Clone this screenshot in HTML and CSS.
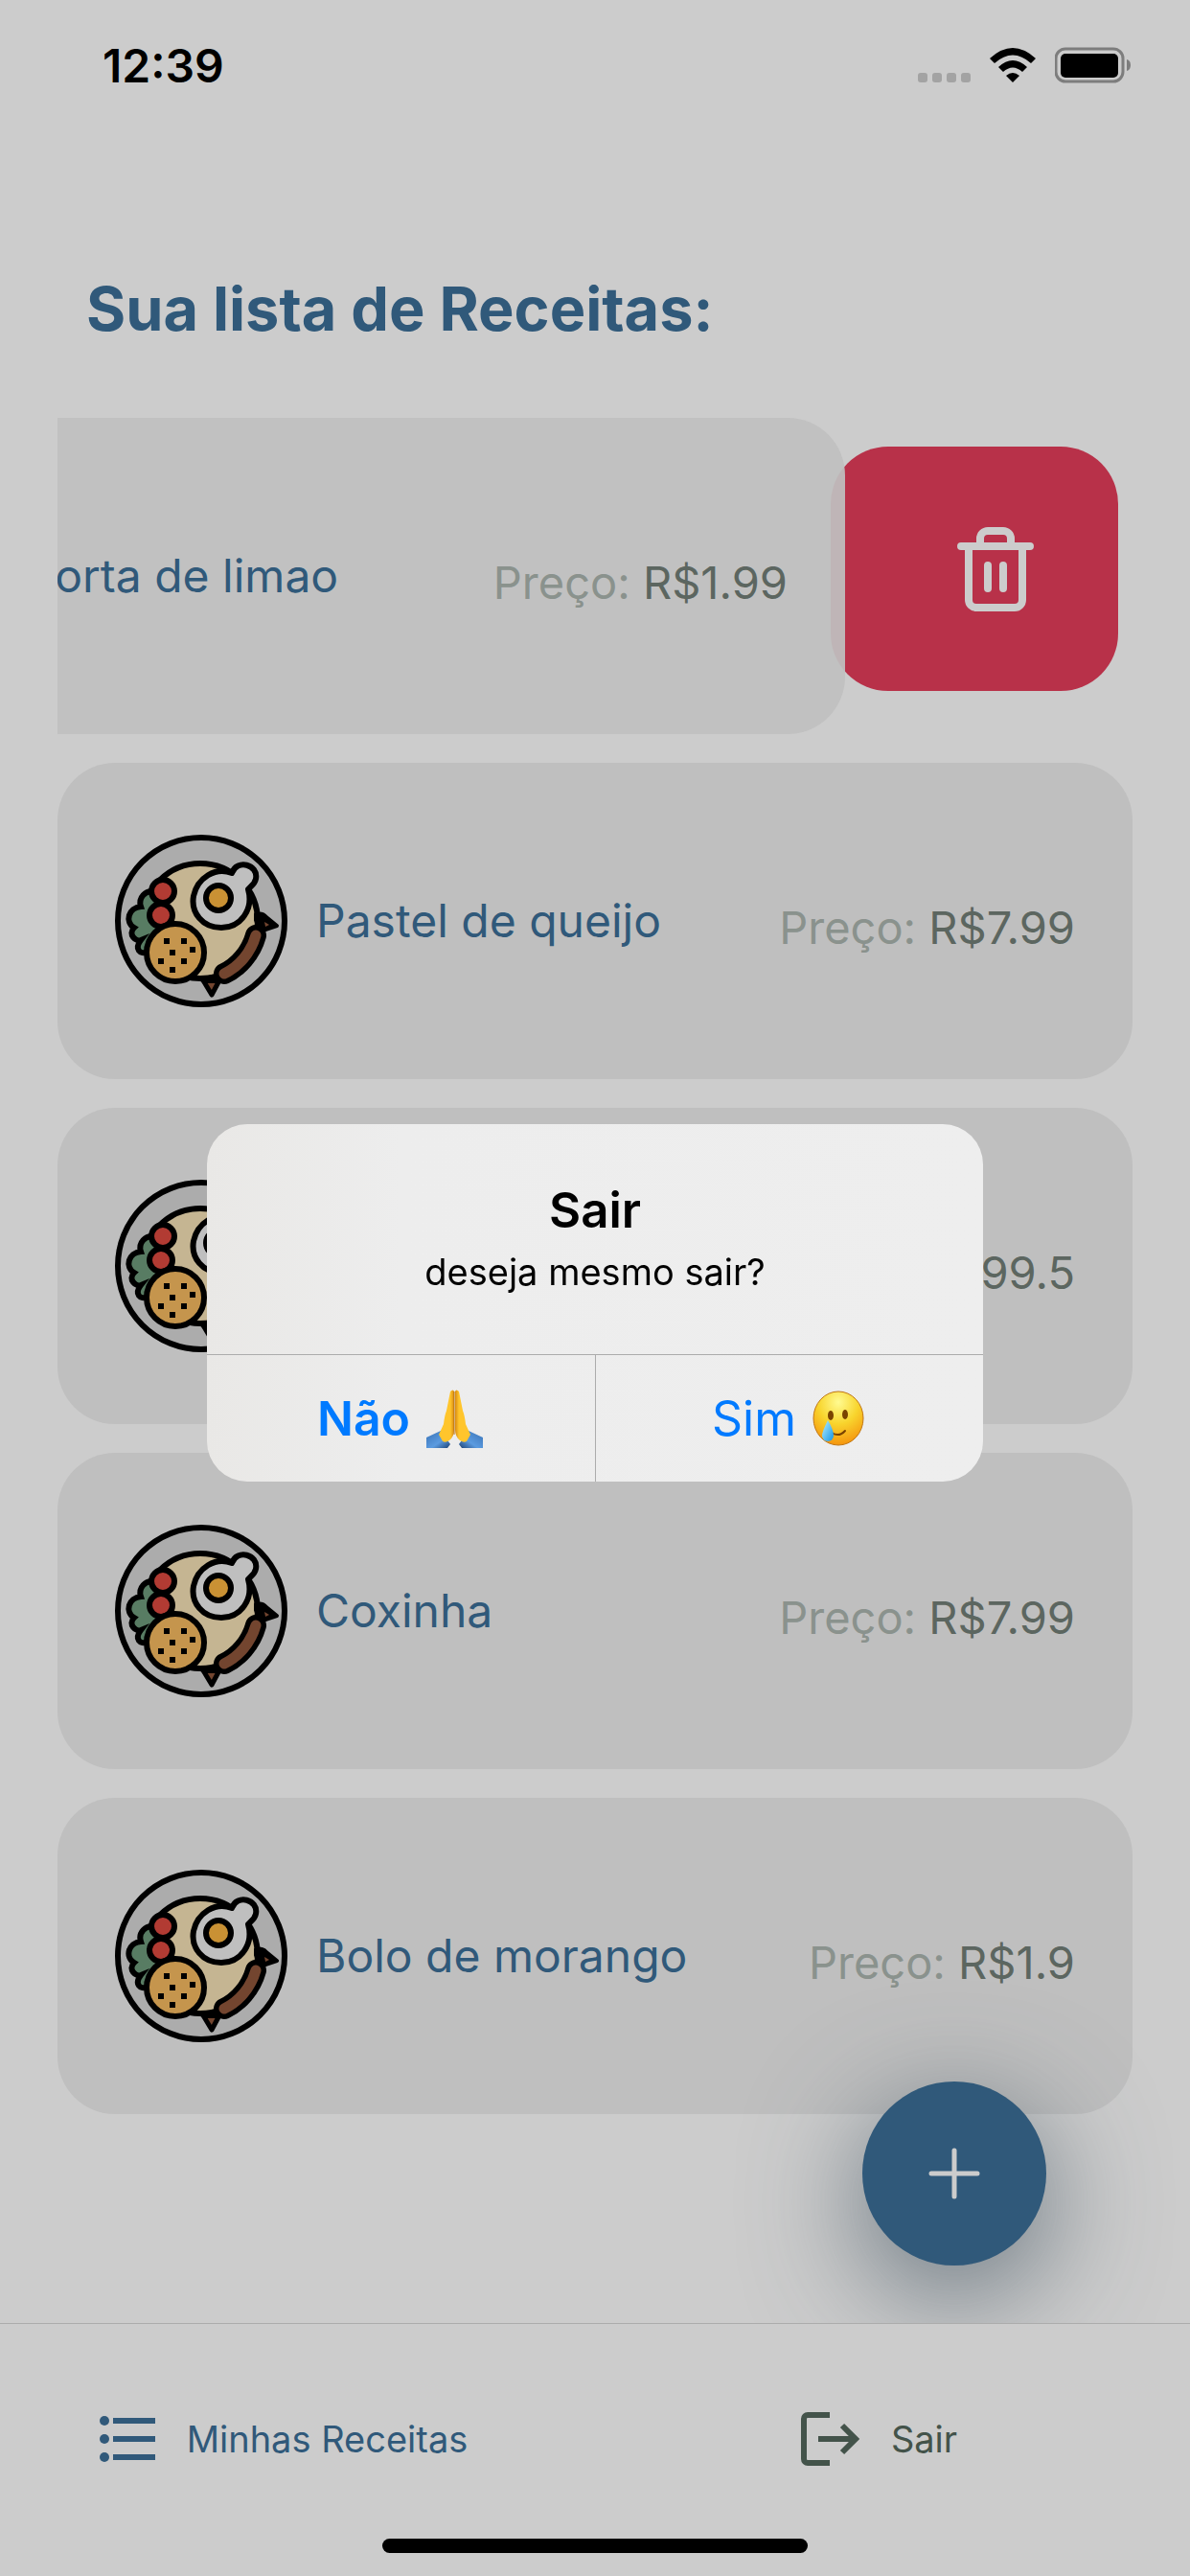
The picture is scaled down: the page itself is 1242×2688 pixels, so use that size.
FILE: index.html
```html
<!DOCTYPE html>
<html lang="pt-BR">
<head>
<meta charset="utf-8">
<meta name="viewport" content="width=device-width, initial-scale=1">
<title>Minhas Receitas</title>
<link rel="stylesheet" href="styles.css">
</head>
<body>
<svg class="sprite" aria-hidden="true">
  <symbol id="plate" viewBox="0 0 180 180">
    <circle cx="90" cy="90" r="87" fill="#acacac" stroke="#000" stroke-width="6"/>
    <circle cx="89" cy="90" r="60" fill="#c5b592" stroke="#000" stroke-width="6"/>
    <path d="M147 89V83q7-2 11 3l11 9-18 6Z" fill="#000" stroke="#000" stroke-width="4" stroke-linejoin="round"/>
    <path d="M156 91l5 3-4 2Z" fill="#73452f"/>
    <path d="M92 152l9 15 8-15Z" fill="#73452f" stroke="#000" stroke-width="5" stroke-linejoin="round"/>
    <path d="M84 149h24v6H92Z" fill="#000"/>
    <path d="M114 145C129 138 142 123 147 105" fill="none" stroke="#000" stroke-width="22" stroke-linecap="round"/>
    <path d="M114 145C129 138 142 123 147 105" fill="none" stroke="#73452f" stroke-width="11" stroke-linecap="round"/>
    <path d="M43 60C34 57 26 66 29 75C16 76 12 91 22 97C15 104 24 112 29 110C22 119 28 126 36 122L62 92Z" transform="translate(-2 0)" fill="#587c63" stroke="#000" stroke-width="6"/>
    <path d="M122 40C127 25 150 31 147 46C146 52 141 54 139 57C145 78 131 97 111 97C91 97 79 81 82 64C86 45 105 33 122 40Z" fill="#bfbfbf" stroke="#000" stroke-width="6" stroke-linejoin="round"/>
    <circle cx="108" cy="66" r="13" fill="#c99134" stroke="#000" stroke-width="6"/>
    <circle cx="50" cy="59" r="12" fill="#b23b33" stroke="#000" stroke-width="6"/>
    <circle cx="48" cy="84" r="12" fill="#b23b33" stroke="#000" stroke-width="6"/>
    <circle cx="63" cy="123" r="30" fill="#c5954d" stroke="#000" stroke-width="6"/>
    <path d="M51 108h6v6h-6zM69 108h6v6h-6zM78 117h6v6h-6zM57 120h6v6h-6zM45 129h6v6h-6zM69 129h6v6h-6zM57 138h6v6h-6z"/>
  </symbol>
</svg>

<div class="app">
  <header class="status">
    <span class="clock">12:39</span>
    <span class="indicators">
      <svg width="55" height="36" viewBox="0 0 55 36" fill="#a3a3a3"><rect y="26" width="10" height="10" rx="3"/><rect x="15" y="26" width="10" height="10" rx="3"/><rect x="30" y="26" width="10" height="10" rx="3"/><rect x="45" y="26" width="10" height="10" rx="3"/></svg>
      <svg width="48" height="36" viewBox="0 0 48 36"><path d="M0 11Q24-11 48 11L43 16Q24-1 5 16Z"/><path d="M9 20Q24 6 39 20L34 25Q24 16 14 25Z"/><path d="M17 29Q24 23 31 29L24 36Z"/></svg>
      <svg width="80" height="38" viewBox="0 0 80 38"><rect x="1" y="2" width="70" height="34" rx="10" fill="none" stroke="#7d7d7d" stroke-width="3"/><rect x="6" y="7" width="60" height="25" rx="5"/><path d="M75 13q4 1 4 6t-4 6Z" fill="#7d7d7d"/></svg>
    </span>
  </header>

  <main class="content">
    <h1>Sua lista de Receitas:</h1>
    <ul class="recipes">
      <li class="row swiped">
        <button class="delete" type="button" aria-label="Excluir">
          <svg width="80" height="88" viewBox="0 0 80 88" fill="none" stroke="#ccc" stroke-width="8" stroke-linecap="round"><path d="M4 20H76M12 20V76a8 8 0 0 0 8 8H60a8 8 0 0 0 8-8V20M24 20V12a8 8 0 0 1 8-8H48a8 8 0 0 1 8 8v8M32 40V64M48 40V64"/></svg>
        </button>
        <article class="card"><svg class="plate"><use href="#plate"/></svg><h2>Torta de limao</h2><p class="price">Preço: <b>R$1.99</b></p></article>
      </li>
      <li class="row"><article class="card"><svg class="plate"><use href="#plate"/></svg><h2>Pastel de queijo</h2><p class="price">Preço: <b>R$7.99</b></p></article></li>
      <li class="row"><article class="card"><svg class="plate"><use href="#plate"/></svg><h2>Bolo</h2><p class="price">Preço: <b>R$99.5</b></p></article></li>
      <li class="row"><article class="card"><svg class="plate"><use href="#plate"/></svg><h2>Coxinha</h2><p class="price">Preço: <b>R$7.99</b></p></article></li>
      <li class="row"><article class="card"><svg class="plate"><use href="#plate"/></svg><h2>Bolo de morango</h2><p class="price">Preço: <b>R$1.9</b></p></article></li>
    </ul>
    <button class="fab" type="button" aria-label="Adicionar receita">
      <svg width="54" height="54" viewBox="0 0 54 54" stroke="#ccc" stroke-width="5" stroke-linecap="round"><path d="M27 3V51M3 27H51"/></svg>
    </button>
  </main>

  <nav class="tabs">
    <a class="tab active" href="#receitas">
      <svg width="60" height="60" viewBox="0 0 60 60" fill="currentColor"><circle cx="6" cy="11" r="5"/><circle cx="6" cy="30" r="5"/><circle cx="6" cy="49" r="5"/><path d="M15 8H59v6H15zM15 27H59v6H15zM15 46H59v6H15z"/></svg>
      Minhas Receitas
    </a>
    <a class="tab" href="#sair">
      <svg width="64" height="60" viewBox="0 0 64 60" fill="none" stroke="currentColor" stroke-width="6"><path d="M32 5H9a4 4 0 0 0-4 4V51a4 4 0 0 0 4 4H32M20 30H60M45 16L59 30L45 44"/></svg>
      Sair
    </a>
  </nav>
  <div class="home-bar"></div>
</div>

<div class="overlay">
  <section class="alert" role="alertdialog" aria-labelledby="alert-title" aria-describedby="alert-text">
    <div class="alert-body">
      <h2 id="alert-title">Sair</h2>
      <p id="alert-text">deseja mesmo sair?</p>
    </div>
    <div class="alert-actions">
      <button class="strong" type="button">Não
        <svg width="64" height="62" viewBox="0 0 64 62" role="img" aria-label="mãos juntas">
          <defs>
            <linearGradient id="skin"><stop offset="0" stop-color="#ffc52c"/><stop offset=".75" stop-color="#ffc52c"/><stop offset="1" stop-color="#d78a12"/></linearGradient>
            <linearGradient id="cuff" y2="1"><stop offset="0" stop-color="#3972b5"/><stop offset=".6" stop-color="#5b9be0"/><stop offset="1" stop-color="#1d4274"/></linearGradient>
          </defs>
          <g id="hand"><path d="M3 51L18 44L28 58L25 62H3Z" fill="url(#cuff)"/><path d="M28 3q3-3 4 0V43q0 7-5 11q-4 3-7 1L16 48L21 37Q22 28 24 23Q26 13 28 3Z" fill="url(#skin)"/></g>
          <use href="#hand" transform="translate(65 0) scale(-1 1)"/>
          <path d="M32 3V48" stroke="#b9700f" stroke-width="1"/>
        </svg>
      </button>
      <button type="button">Sim
        <svg width="60" height="62" viewBox="4 0 60 62" role="img" aria-label="rosto sorrindo com lágrima">
          <defs>
            <radialGradient id="face" cx=".5" cy=".2" r=".8"><stop offset="0" stop-color="#fffb91"/><stop offset=".5" stop-color="#f8d52e"/><stop offset="1" stop-color="#f5950d"/></radialGradient>
            <linearGradient id="tear" y2="1"><stop offset="0" stop-color="#b8f0ff"/><stop offset="1" stop-color="#1495e6"/></linearGradient>
          </defs>
          <ellipse cx="34" cy="31" rx="26" ry="28" fill="url(#face)" stroke="#c07612" stroke-width="1"/>
          <ellipse cx="26" cy="28" rx="3" ry="5" fill="#7a4300"/><ellipse cx="41" cy="27" rx="3" ry="5" fill="#7a4300"/>
          <path d="M27 46Q35 51 41 44" fill="none" stroke="#7a4300" stroke-width="2" stroke-linecap="round"/>
          <path d="M23 33Q17 45 17 49a6 6 0 0 0 12 0Q29 43 23 33Z" fill="url(#tear)"/>
        </svg>
      </button>
    </div>
  </section>
</div>
</body>
</html>
```
FILE: styles.css
```css
* { box-sizing: border-box; }

body {
  margin: 0;
  background: #ccc;
  color: #000;
  font-family: Inter, "Liberation Sans", sans-serif;
}

h1, h2, p, ul { margin: 0; padding: 0; }
ul { list-style: none; }
button { border: 0; padding: 0; background: none; font: inherit; }
svg { display: block; flex: none; }
.sprite { position: absolute; width: 0; height: 0; }

.app {
  min-height: 100vh;
  display: flex;
  flex-direction: column;
}

.status {
  display: flex;
  justify-content: space-between;
  align-items: center;
  height: 136px;
  padding: 0 61px 0 107px;
}
.clock { font-size: 48px; font-weight: 600; }
.indicators { display: flex; align-items: center; gap: 20px; }

.content {
  position: relative;
  flex: 1;
  padding: 146px 60px 0;
  overflow: hidden;
}
h1 {
  padding: 0 30px;
  font-size: 63px;
  line-height: 80px;
  font-weight: 700;
  color: #30597a;
}

.recipes {
  display: flex;
  flex-direction: column;
  gap: 30px;
  padding-top: 74px;
}
.row { position: relative; overflow: hidden; }
.card {
  display: flex;
  align-items: center;
  gap: 30px;
  height: 330px;
  padding: 0 60px;
  border-radius: 60px;
  background: #bfbfbf;
}
.plate { width: 180px; height: 180px; }
.card h2 {
  flex: 1;
  font-size: 48px;
  line-height: 60px;
  font-weight: 400;
  color: #30597a;
  white-space: nowrap;
}
.price {
  padding-top: 14px;
  font-size: 47px;
  line-height: 58px;
  color: #8a928d;
  white-space: nowrap;
}
.price b { font-weight: 400; color: #5c6660; }

.swiped .card { position: relative; left: -300px; background: rgba(191, 191, 191, 0.93); }
.delete {
  position: absolute;
  top: 30px;
  right: 15px;
  display: flex;
  align-items: center;
  justify-content: center;
  width: 300px;
  height: 255px;
  padding-left: 44px;
  border-radius: 60px;
  background: #b83149;
}

.fab {
  position: absolute;
  right: 150px;
  bottom: 60px;
  display: flex;
  align-items: center;
  justify-content: center;
  width: 192px;
  height: 192px;
  border-radius: 50%;
  background: #30597a;
  box-shadow: 0 30px 120px rgba(60, 78, 92, 0.7);
}

.tabs {
  display: grid;
  grid-template-columns: 1fr 1fr;
  height: 225px;
  border-top: 1px solid #acacac;
}
.tab {
  display: flex;
  align-items: center;
  justify-content: center;
  gap: 32px;
  height: 240px;
  padding-right: 30px;
  font-size: 38px;
  color: #43534a;
  text-decoration: none;
}
.tab.active { color: #30597a; }
.home-bar {
  align-self: center;
  width: 444px;
  height: 15px;
  margin-bottom: 24px;
  border-radius: 8px;
  background: #000;
}

.overlay {
  position: fixed;
  inset: 0;
  display: flex;
  align-items: center;
  justify-content: center;
  padding-top: 31px;
}
.alert {
  width: 810px;
  border-radius: 42px;
  overflow: hidden;
  background: linear-gradient(90deg, #e9e8e6, #ededed 25%, #eee);
}
.alert-body {
  height: 240px;
  padding-top: 60px;
  text-align: center;
}
.alert-body h2 { font-size: 51px; line-height: 60px; font-weight: 600; }
.alert-body p { font-size: 38px; line-height: 48px; padding-top: 10px; }
.alert-actions {
  display: grid;
  grid-template-columns: 1fr 1fr;
  height: 133px;
  border-top: 1px solid #acacac;
}
.alert-actions button {
  display: flex;
  align-items: center;
  justify-content: center;
  gap: 14px;
  font-size: 50px;
  color: #007aff;
}
.alert-actions button + button { border-left: 1px solid #acacac; }
.alert-actions .strong { font-weight: 600; }
```
